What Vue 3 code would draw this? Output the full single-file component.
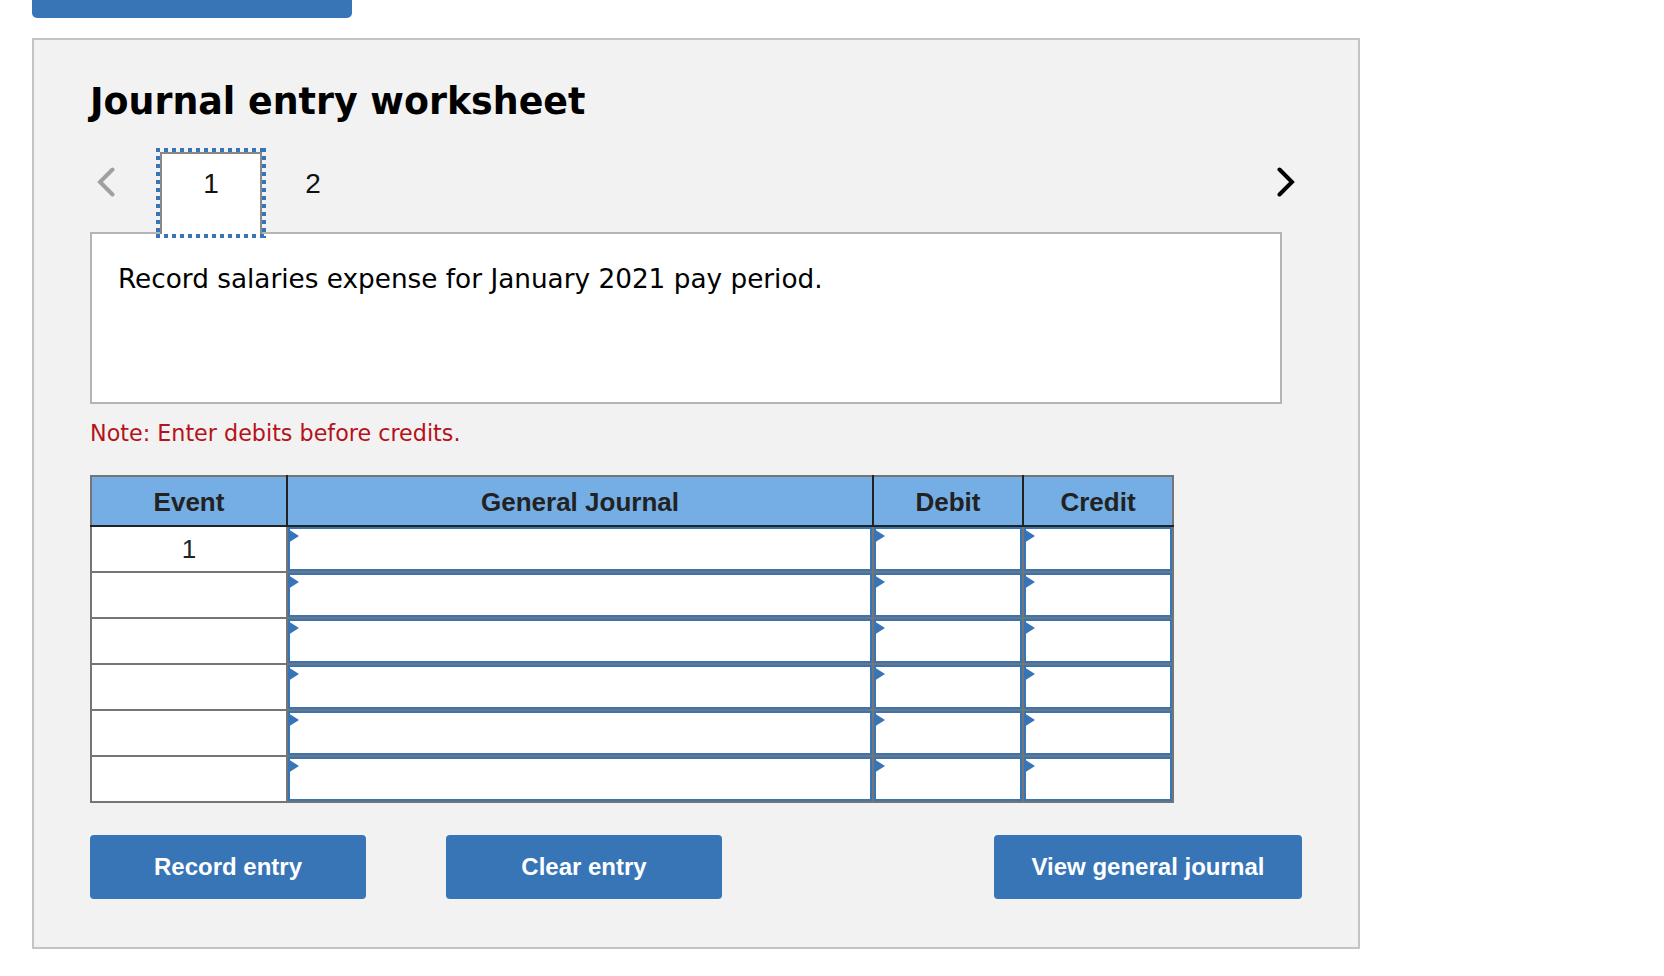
<template>
  <div class="page">
    <div class="top-btn"></div>
    <div class="panel">
      <h2 class="title">Journal entry worksheet</h2>
      <div class="tabs">
        <svg class="chevron chevron--prev" width="18" height="30" viewBox="0 0 18 30">
          <path d="M15.5 2.5 L3 15 L15.5 27.5" fill="none" stroke="#a0a0a0" stroke-width="4" stroke-linecap="round" stroke-linejoin="miter" />
        </svg>
        <div class="tab tab--active"><span>1</span></div>
        <div class="tab"><span>2</span></div>
        <svg class="chevron chevron--next" width="18" height="30" viewBox="0 0 18 30">
          <path d="M2.5 2.5 L15 15 L2.5 27.5" fill="none" stroke="#000" stroke-width="4" stroke-linecap="round" stroke-linejoin="miter" />
        </svg>
      </div>
      <div class="message">Record salaries expense for January 2021 pay period.</div>
      <p class="note">Note: Enter debits before credits.</p>
      <table class="journal">
        <colgroup>
          <col class="col-event" />
          <col class="col-account" />
          <col class="col-money" />
          <col class="col-money" />
        </colgroup>
        <thead>
          <tr>
            <th>Event</th>
            <th>General Journal</th>
            <th>Debit</th>
            <th>Credit</th>
          </tr>
        </thead>
        <tbody>
          <tr v-for="row in rows" :key="row.id">
            <td class="event">{{ row.event }}</td>
            <td v-for="col in 3" :key="col"><div class="entry"></div></td>
          </tr>
        </tbody>
      </table>
      <div class="actions">
        <button class="btn btn--fixed">Record entry</button>
        <button class="btn btn--fixed">Clear entry</button>
        <button class="btn btn--view">View general journal</button>
      </div>
    </div>
  </div>
</template>

<script setup>
const rows = [
  { id: 1, event: '1' },
  { id: 2, event: '' },
  { id: 3, event: '' },
  { id: 4, event: '' },
  { id: 5, event: '' },
  { id: 6, event: '' },
]
</script>

<style>
html, body {
  margin: 0;
  background: #fff;
}
</style>

<style scoped>
.page {
  width: 1664px;
  height: 976px;
  padding-left: 32px;
  box-sizing: border-box;
  overflow: hidden;
}
.top-btn {
  width: 320px;
  height: 18px;
  background: #3775b7;
  border-radius: 0 0 5px 5px;
}
.panel {
  width: 1328px;
  height: 911px;
  margin-top: 20px;
  padding: 0 56px;
  box-sizing: border-box;
  background: #f2f2f2;
  border: 2px solid #c4c4c4;
}
.title {
  margin: 0;
  padding-top: 41px;
  height: 71px;
  box-sizing: content-box;
  font-family: "DejaVu Sans", sans-serif;
  font-size: 36.4px;
  line-height: 42px;
  font-weight: 700;
  color: #000;
}
.tabs {
  display: flex;
  position: relative;
  z-index: 1;
  height: 82px;
  margin-bottom: -2px;
  font-family: "Liberation Sans", sans-serif;
  font-size: 28px;
  color: #111;
}
.chevron {
  flex: none;
  margin-top: 15px;
}
.chevron--prev {
  margin-left: 7px;
  margin-right: 45px;
}
.chevron--next {
  margin-left: auto;
  margin-right: 7px;
}
.tab {
  width: 102px;
  height: 82px;
  box-sizing: border-box;
  padding-top: 16px;
  text-align: center;
  line-height: 32px;
  position: relative;
}
.tab--active {
  padding-top: 14px;
  background: #fff;
  border: 2px solid #888;
  border-bottom: none;
}
.tab--active::before {
  content: "";
  position: absolute;
  top: -6px;
  left: -6px;
  right: -6px;
  bottom: -4px;
  background:
    repeating-linear-gradient(90deg, #3775b7 0 4px, transparent 4px 8px) top left / 100% 4px no-repeat,
    repeating-linear-gradient(90deg, #3775b7 0 4px, transparent 4px 8px) bottom left / 100% 4px no-repeat,
    repeating-linear-gradient(180deg, #3775b7 0 4px, transparent 4px 8px) top left / 4px 100% no-repeat,
    repeating-linear-gradient(180deg, #3775b7 0 4px, transparent 4px 8px) top right / 4px 100% no-repeat;
}
.message {
  width: 1192px;
  height: 172px;
  box-sizing: border-box;
  padding: 29px 26px;
  background: #fff;
  border: 2px solid #b5b5b5;
  font-family: "DejaVu Sans", sans-serif;
  font-size: 26.3px;
  line-height: 32px;
  color: #000;
}
.note {
  margin: 15px 0 0;
  height: 56px;
  font-family: "DejaVu Sans", sans-serif;
  font-size: 22.25px;
  line-height: 28px;
  color: #b5121b;
}
.journal {
  width: 1084px;
  table-layout: fixed;
  border-collapse: collapse;
  border: 2px solid #757575;
  font-family: "Liberation Sans", sans-serif;
  background: #fff;
}
.col-event {
  width: 196px;
}
.col-money {
  width: 150px;
}
.journal th {
  height: 50px;
  padding: 2px 0 0;
  box-sizing: border-box;
  background: #75aee5;
  border-left: 2px solid #222;
  border-bottom: 2px solid #222;
  font-size: 26px;
  font-weight: 700;
  color: #222;
}
.journal th:first-child {
  border-left: none;
}
.journal td {
  height: 44px;
  padding: 0;
  border: 2px solid #757575;
}
.journal .event {
  text-align: center;
  font-size: 26px;
  color: #222;
}
.entry {
  position: relative;
  height: 44px;
  box-sizing: border-box;
  border: 2px solid #3775b7;
  background: #fff;
}
.entry::before {
  content: "";
  position: absolute;
  top: 0;
  left: -2px;
  border-left: 11px solid #3775b7;
  border-top: 7px solid transparent;
  border-bottom: 7px solid transparent;
}
.actions {
  display: flex;
  margin-top: 32px;
  gap: 80px;
}
.btn {
  height: 64px;
  padding: 0;
  border: none;
  border-radius: 4px;
  background: #3775b7;
  font-family: "Liberation Sans", sans-serif;
  font-size: 24px;
  font-weight: 700;
  color: #fff;
}
.btn--fixed {
  width: 276px;
}
.btn--view {
  width: 308px;
  margin-left: auto;
}
</style>
